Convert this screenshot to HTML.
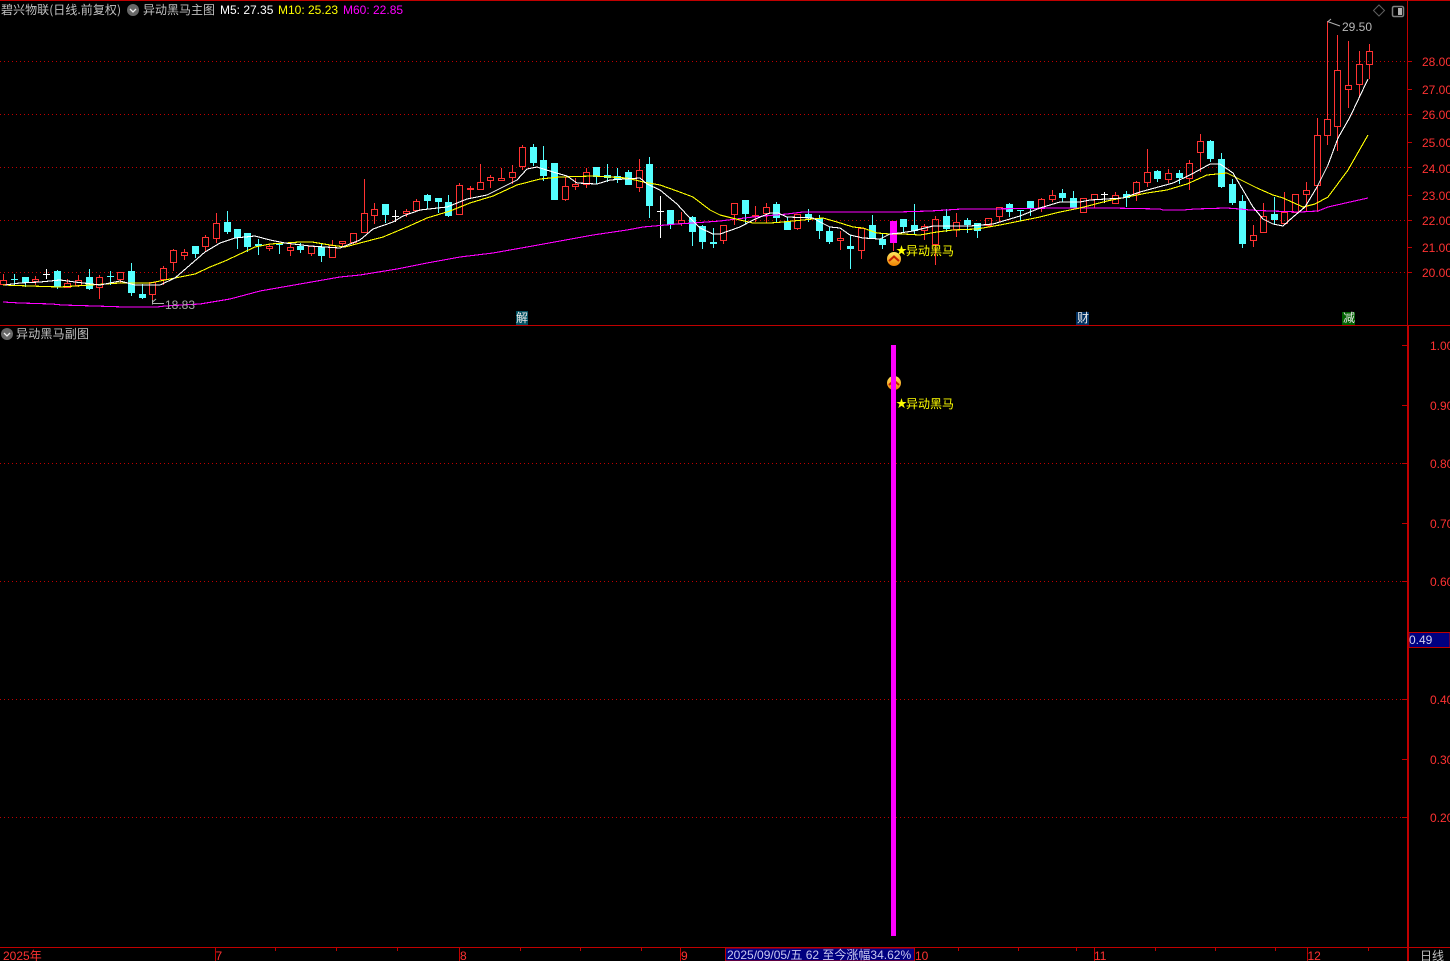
<!DOCTYPE html>
<html><head><meta charset="utf-8"><title>异动黑马</title>
<style>
html,body{margin:0;padding:0;background:#000;width:1450px;height:961px;overflow:hidden}
svg{display:block;position:absolute;left:0;top:0}
text{font-family:"Liberation Sans","WenQuanYi Zen Hei","Noto Sans CJK SC",sans-serif;font-size:12px}
.cn{font-family:"WenQuanYi Zen Hei","Noto Sans CJK SC","Liberation Sans",sans-serif;font-size:12px}
.ax{fill:#ff3232;font-size:12px}
.g{fill:#c0c0c0}
</style></head><body>
<svg width="1450" height="961" viewBox="0 0 1450 961" xmlns="http://www.w3.org/2000/svg">
<rect width="1450" height="961" fill="#000"/>
<g stroke="#c00000" stroke-width="1" stroke-dasharray="1 3" shape-rendering="crispEdges" fill="none">
<path d="M0 61.5H1407M0 114.5H1407M0 167.5H1407M0 220.5H1407M0 272.5H1407"/>
<path d="M0 463.5H1402M0 581.5H1402M0 699.5H1402M0 817.5H1402"/>
</g>
<g shape-rendering="crispEdges" fill="none" stroke="#c00000">
<path d="M0 0.5H1450" />
<path d="M0 325.5H1450M0 947.5H1450"/>
<path d="M1407.5 0V325"/>
<path d="M1407.5 325V961M1408.5 325V961"/>
<path d="M1407 61.5h5M1407 89.5h5M1407 114.5h5M1407 142.5h5M1407 167.5h5M1407 195.5h5M1407 220.5h5M1407 247.5h5M1407 272.5h5"/>
<path d="M1402 345.5h5M1402 405.5h5M1402 463.5h5M1402 523.5h5M1402 581.5h5M1402 699.5h5M1402 759.5h5M1402 817.5h5"/>
<path d="M215.5 947V961M459.5 947V961M680.5 947V961M1094.5 947V961M1307.5 947V961"/>
<path d="M275.5 947v4M336.5 947v4M397.5 947v4M520.5 947v4M580.5 947v4M641.5 947v4M742.5 947v4M800.5 947v4M860.5 947v4M958.5 947v4M1018.5 947v4M1076.5 947v4M1155.5 947v4M1215.5 947v4M1275.5 947v4M1368.5 947v4"/>
</g>
<!-- red wicks -->
<path shape-rendering="crispEdges" fill="none" stroke="#ff3232" d="M3.5 274V280M3.5 284V285M35.5 276V279M35.5 281V285M67.5 279V283M78.5 275V280M78.5 285V287M99.5 275V277M99.5 287V299M120.5 279V283M152.5 294V303M163.5 266V268M163.5 279V285M173.5 249V250M173.5 262V271M184.5 249V252M184.5 255V260M205.5 235V237M205.5 246V252M216.5 213V223M216.5 238V243M269.5 244V246M269.5 248V251M290.5 244V247M290.5 250V256M311.5 253V256M332.5 240V245M342.5 243V247M353.5 242V245M364.5 179V213M374.5 203V209M374.5 215V224M406.5 209V211M406.5 213V217M416.5 199V201M416.5 210V211M459.5 183V185M459.5 214V215M470.5 186V188M470.5 189V199M480.5 164V182M490.5 175V177M490.5 180V188M501.5 168V178M501.5 180V181M512.5 165V172M512.5 177V184M522.5 145V147M522.5 166V170M565.5 177V186M565.5 199V201M575.5 178V184M575.5 186V190M586.5 168V172M586.5 184V188M639.5 159V170M639.5 187V192M681.5 212V220M681.5 223V226M723.5 240V244M734.5 214V225M755.5 206V215M755.5 216V222M766.5 203V207M766.5 213V223M797.5 228V230M840.5 231V238M840.5 240V250M861.5 250V259M893.5 243V251M924.5 224V226M924.5 230V240M935.5 216V219M935.5 244V265M956.5 213V222M956.5 229V237M988.5 225V227M999.5 216V222M1041.5 198V199M1041.5 208V212M1052.5 190V195M1052.5 199V202M1094.5 199V208M1115.5 192V195M1136.5 181V182M1136.5 193V201M1147.5 149V172M1147.5 182V187M1168.5 169V173M1168.5 179V183M1189.5 160V163M1189.5 178V190M1200.5 134V141M1200.5 152V172M1253.5 225V235M1253.5 240V247M1263.5 203V216M1284.5 192V212M1306.5 182V190M1306.5 194V212M1317.5 118V135M1317.5 185V212M1327.5 21V119M1327.5 135V145M1337.5 35V70M1337.5 126V151M1348.5 41V85M1348.5 89V108M1359.5 51V64M1359.5 84V98M1369.5 44V51M1369.5 64V79"/>
<!-- red bodies -->
<path shape-rendering="crispEdges" fill="none" stroke="#ff3232" d="M0.5 280.5h6V284.5h-6zM32.5 279.5h6V281.5h-6zM64.5 283.5h6V287.5h-6zM75.5 280.5h6V285.5h-6zM96.5 277.5h6V287.5h-6zM117.5 272.5h6V279.5h-6zM149.5 282.5h6V294.5h-6zM160.5 268.5h6V279.5h-6zM170.5 250.5h6V262.5h-6zM181.5 252.5h6V255.5h-6zM202.5 237.5h6V246.5h-6zM213.5 223.5h6V238.5h-6zM266.5 246.5h6V248.5h-6zM287.5 247.5h6V250.5h-6zM308.5 246.5h6V253.5h-6zM329.5 245.5h6V257.5h-6zM339.5 241.5h6V243.5h-6zM350.5 233.5h6V242.5h-6zM361.5 213.5h6V232.5h-6zM371.5 209.5h6V215.5h-6zM403.5 211.5h6V213.5h-6zM413.5 201.5h6V210.5h-6zM456.5 185.5h6V214.5h-6zM467.5 188.5h6V189.5h-6zM477.5 182.5h6V189.5h-6zM487.5 177.5h6V180.5h-6zM498.5 178.5h6V180.5h-6zM509.5 172.5h6V177.5h-6zM519.5 147.5h6V166.5h-6zM562.5 186.5h6V199.5h-6zM572.5 184.5h6V186.5h-6zM583.5 172.5h6V184.5h-6zM636.5 170.5h6V187.5h-6zM678.5 220.5h6V223.5h-6zM720.5 225.5h6V240.5h-6zM731.5 203.5h6V214.5h-6zM752.5 215.5h6V216.5h-6zM763.5 207.5h6V213.5h-6zM794.5 214.5h6V228.5h-6zM837.5 238.5h6V240.5h-6zM858.5 228.5h6V250.5h-6zM921.5 226.5h6V230.5h-6zM932.5 219.5h6V244.5h-6zM953.5 222.5h6V229.5h-6zM985.5 218.5h6V225.5h-6zM996.5 207.5h6V216.5h-6zM1038.5 199.5h6V208.5h-6zM1049.5 195.5h6V199.5h-6zM1080.5 198.5h6V212.5h-6zM1091.5 194.5h6V199.5h-6zM1112.5 195.5h6V203.5h-6zM1133.5 182.5h6V193.5h-6zM1144.5 172.5h6V182.5h-6zM1165.5 173.5h6V179.5h-6zM1186.5 163.5h6V178.5h-6zM1197.5 141.5h6V152.5h-6zM1250.5 235.5h6V240.5h-6zM1260.5 216.5h6V232.5h-6zM1281.5 212.5h6V223.5h-6zM1292.5 194.5h6V212.5h-6zM1303.5 190.5h6V194.5h-6zM1314.5 135.5h6V185.5h-6zM1324.5 119.5h6V135.5h-6zM1334.5 70.5h6V126.5h-6zM1345.5 85.5h6V89.5h-6zM1356.5 64.5h6V84.5h-6zM1366.5 51.5h6V64.5h-6z"/>
<!-- cyan wicks -->
<path shape-rendering="crispEdges" fill="none" stroke="#54ffff" d="M14.5 274V286M25.5 277V287M57.5 270V289M89.5 269V290M110.5 271V285M131.5 263V296M142.5 284V299M195.5 246V258M227.5 211V234M237.5 229V249M247.5 233V252M258.5 239V255M279.5 243V254M300.5 243V253M321.5 244V262M385.5 204V223M427.5 194V209M438.5 198V213M448.5 195V217M533.5 144V166M543.5 146V181M554.5 163V200M596.5 167V184M607.5 164V182M617.5 168V183M628.5 170V185M649.5 157V218M670.5 210V229M692.5 216V246M702.5 225V249M713.5 228V248M745.5 200V224M776.5 202V223M787.5 217V230M808.5 209V222M819.5 215V239M829.5 227V244M850.5 235V269M872.5 215V239M882.5 233V249M903.5 219V232M914.5 204V234M946.5 209V232M967.5 218V233M977.5 223V238M1009.5 203V217M1020.5 210V221M1030.5 201V216M1062.5 189V202M1073.5 191V208M1126.5 191V207M1157.5 170V182M1179.5 170V184M1210.5 140V162M1221.5 153V188M1232.5 179V205M1242.5 195V248M1274.5 197V224"/>
<!-- cyan bodies -->
<path shape-rendering="crispEdges" fill="#54ffff" d="M11 279h7v1h-7zM22 277h7V283h-7zM54 271h7V287h-7zM86 277h7V289h-7zM107 276h7v1h-7zM128 271h7V293h-7zM139 294h7V298h-7zM192 246h7V254h-7zM224 222h7V232h-7zM234 229h7V238h-7zM244 233h7V247h-7zM255 244h7V246h-7zM276 243h7V245h-7zM297 246h7V250h-7zM318 247h7V256h-7zM382 204h7V215h-7zM424 195h7V201h-7zM435 198h7V202h-7zM445 202h7V216h-7zM530 147h7V163h-7zM540 160h7V176h-7zM551 163h7V200h-7zM593 167h7V177h-7zM604 175h7V178h-7zM614 176h7V179h-7zM625 172h7V185h-7zM646 164h7V206h-7zM667 210h7V225h-7zM689 217h7V232h-7zM699 226h7V242h-7zM710 242h7V244h-7zM742 200h7V214h-7zM773 204h7V218h-7zM784 221h7V230h-7zM805 214h7V218h-7zM816 218h7V231h-7zM826 231h7V242h-7zM847 246h7V249h-7zM869 225h7V239h-7zM879 239h7V245h-7zM900 219h7V227h-7zM911 225h7V231h-7zM943 216h7V229h-7zM964 220h7V225h-7zM974 223h7V231h-7zM1006 204h7V212h-7zM1017 210h7v1h-7zM1027 201h7V209h-7zM1059 193h7V198h-7zM1070 198h7V208h-7zM1123 194h7V198h-7zM1154 171h7V179h-7zM1176 173h7V178h-7zM1207 141h7V159h-7zM1218 159h7V187h-7zM1229 184h7V203h-7zM1239 201h7V244h-7zM1271 214h7V220h-7z"/>
<!-- white crosses -->
<path shape-rendering="crispEdges" fill="none" stroke="#fff" d="M46.5 269V279M43 274.5h7M395.5 210V222M392 216.5h7M660.5 196V238M657 211.5h7M1104.5 192V203M1101 194.5h7"/>
<rect x="890" y="221" width="7" height="22" fill="#ff00ff" shape-rendering="crispEdges"/>
<!-- MA60 -->
<polyline shape-rendering="crispEdges" fill="none" stroke="#ff00ff" stroke-width="1.1" points="3,302 20,303 52,304 62,305 95,306 125,307 157,307 165,306 200,304 230,299 260,291 300,284 340,277 360,275 397,269 427,263 460,257 493,253 527,247 560,241 593,235 627,230 643,227 677,224 693,223 720,221 753,217 787,214 803,212 897,212 930,211 962,209 987,209 1060,208 1110,208 1160,209 1163,210 1183,210 1195,209 1226,208 1240,209 1250,210 1270,211 1300,212 1318,211 1328,207 1350,202 1368,198"/>
<!-- MA10 -->
<polyline shape-rendering="crispEdges" fill="none" stroke="#ffff00" stroke-width="1.1" points="3,285 30,286 60,287 90,285 120,283 150,283 165,280 175,278 195,274 210,267 225,261 240,254 255,247 270,244 300,242 312,242 330,245 345,247 360,243 383,237 407,227 427,218 450,211 470,203 493,196 517,185 540,179 560,177 593,176 627,178 643,182 660,185 677,191 693,197 710,210 720,215 740,220 753,223 770,223 783,222 803,220 823,218 837,222 853,227 863,228 877,233 890,234 903,234 920,235 937,232 953,230 977,229 1000,225 1020,221 1040,217 1060,212 1080,208 1107,201 1127,197 1147,193 1167,190 1187,184 1207,175 1227,173 1237,178 1257,188 1273,195 1283,198 1303,207 1315,204 1328,197 1348,170 1368,135"/>
<!-- MA5 -->
<polyline shape-rendering="crispEdges" fill="none" stroke="#ffffff" stroke-width="1.1" points="5,285 20,283 40,282 60,280 75,282 100,285 120,281 135,285 160,285 175,278 190,265 205,252 220,243 235,238 255,236 270,240 285,243 310,246 340,248 360,240 373,229 393,222 403,216 420,210 447,207 467,199 487,195 503,187 517,180 527,169 537,167 553,172 567,176 577,183 597,184 610,180 640,178 647,184 660,190 677,204 687,215 700,228 713,234 720,234 740,227 753,220 770,213 778,213 787,217 813,218 820,222 830,227 840,228 850,235 863,238 880,239 890,234 900,233 913,231 933,226 953,226 970,226 993,224 1020,216 1040,208 1060,202 1080,202 1090,200 1123,198 1140,192 1173,183 1190,175 1210,164 1220,164 1233,173 1243,190 1253,207 1263,219 1273,224 1283,226 1293,217 1305,207 1317,187 1328,165 1338,138 1350,117 1368,79"/>
<!-- annotations -->
<path fill="none" stroke="#b0b0b0" d="M152.5 300V304.5M152.5 302L156 299M152.5 303.5H164M1327.5 21.5L1340 26M1327.5 22L1331 19"/>
<text x="165" y="309" fill="#a8a8a8">18.83</text>
<text x="1342" y="31" fill="#b8b8b8">29.50</text>
<path d="M1379 5l5.5 5.500-5.500 5.500-5.500-5.500z" fill="none" stroke="#606060"/>
<rect x="1392.500" y="6.500" width="11" height="10" rx="1.500" fill="#000" stroke="#808080" stroke-width="1.500"/>
<rect x="1398" y="8" width="4" height="7" fill="#b0b0b0"/>
<text x="1" y="14" class="cn g" textLength="120" lengthAdjust="spacing">碧兴物联(日线.前复权)</text>
<circle cx="133" cy="10" r="6" fill="#686868"/><path d="M130 9l3 3 3-3" fill="none" stroke="#eee" stroke-width="1.300"/>
<text x="143" y="14" class="cn g">异动黑马主图</text>
<text x="220" y="14" fill="#fff">M5: 27.35</text>
<text x="278" y="14" fill="#ffff00">M10: 25.23</text>
<text x="343" y="14" fill="#ff00ff">M60: 22.85</text>
<circle cx="7" cy="334" r="6" fill="#686868"/><path d="M4 333l3 3 3-3" fill="none" stroke="#eee" stroke-width="1.300"/>
<text x="16" y="338" class="cn g" textLength="73" lengthAdjust="spacing">异动黑马副图</text>
<!-- right axis -->
<g class="ax">
<text class="ax" x="1422" y="66">28.00</text><text class="ax" x="1422" y="94">27.00</text><text class="ax" x="1422" y="119">26.00</text><text class="ax" x="1422" y="147">25.00</text><text class="ax" x="1422" y="173">24.00</text><text class="ax" x="1422" y="200">23.00</text><text class="ax" x="1422" y="225">22.00</text><text class="ax" x="1422" y="252">21.00</text><text class="ax" x="1422" y="277">20.00</text>
<text class="ax" x="1430" y="350">1.00</text><text class="ax" x="1430" y="410">0.90</text><text class="ax" x="1430" y="468">0.80</text><text class="ax" x="1430" y="528">0.70</text><text class="ax" x="1430" y="586">0.60</text><text class="ax" x="1430" y="704">0.40</text><text class="ax" x="1430" y="764">0.30</text><text class="ax" x="1430" y="822">0.20</text>
</g>
<rect x="1409" y="632.500" width="41" height="15" fill="#000080" stroke="#c00000" shape-rendering="crispEdges"/>
<text x="1409" y="644" fill="#d0d0f0">0.49</text>
<!-- event tags -->
<rect x="516" y="311" width="12" height="14" fill="#005060"/><text x="516" y="322" class="cn" fill="#e8e8e8">解</text>
<rect x="1076" y="312" width="13" height="13" fill="#003060"/><text x="1077" y="322" class="cn" fill="#e8e8e8">财</text>
<rect x="1342" y="312" width="13" height="13" fill="#006000"/><text x="1343" y="322" class="cn" fill="#e8e8e8">减</text>
<!-- signal main -->
<defs><linearGradient id="o" x1="0" y1="0" x2="0" y2="1"><stop offset="0" stop-color="#ffe860"/><stop offset="1" stop-color="#f08000"/></linearGradient></defs>
<circle cx="894" cy="259" r="7" fill="url(#o)"/>
<path d="M889 261l5-4.500 5 4.500" fill="none" stroke="#c02000" stroke-width="2"/>
<text x="896" y="254" fill="#ffff00" style="font-size:11px">★</text>
<text x="906" y="255" class="cn" fill="#ffff00">异动黑马</text>
<!-- signal sub -->
<circle cx="894" cy="383" r="7" fill="url(#o)"/>
<path d="M889 385l5-4.500 5 4.500" fill="none" stroke="#c02000" stroke-width="2"/>
<rect x="891" y="345" width="5" height="591" fill="#ff00ff" shape-rendering="crispEdges"/>
<text x="896" y="407" fill="#ffff00" style="font-size:11px">★</text>
<text x="906" y="408" class="cn" fill="#ffff00">异动黑马</text>
<!-- bottom -->
<text x="3" y="960" fill="#ff3232">2025年</text>
<text x="215.500" y="960" fill="#ff3232">7</text>
<text x="460" y="960" fill="#ff3232">8</text>
<text x="681" y="960" fill="#ff3232">9</text>
<text x="915" y="960" fill="#ff3232">10</text>
<text x="1094" y="960" fill="#ff3232">11</text>
<text x="1307.500" y="960" fill="#ff3232">12</text>
<rect x="725.500" y="948" width="189" height="13" fill="#000080" stroke="#c00000" shape-rendering="crispEdges"/>
<text x="727" y="959" fill="#c8c8f0">2025/09/05/五 62 至今涨幅34.62%</text>
<text x="1420" y="960" class="cn g">日线</text>
</svg>
</body></html>
